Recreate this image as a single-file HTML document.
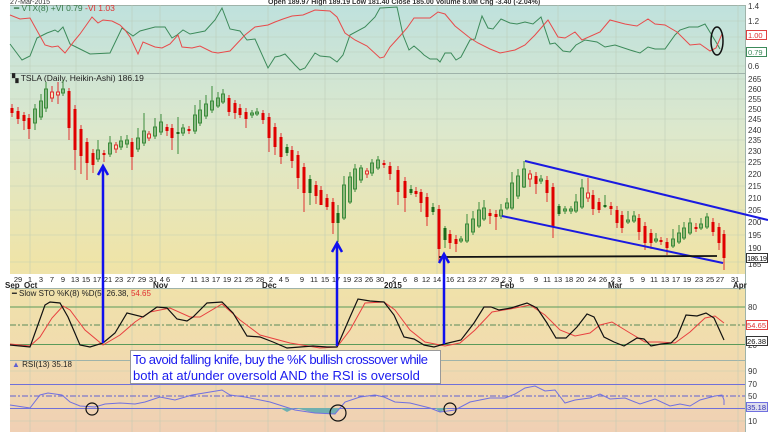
<!DOCTYPE html>
<html><head><meta charset="utf-8"><style>
html,body{margin:0;padding:0;background:#fff}
svg{display:block;font-family:"Liberation Sans",sans-serif}
.r{fill:#e00000}.rh{fill:#f6e4c0;stroke:#e03030;stroke-width:1}
.g{fill:none;stroke:#3c8c3c;stroke-width:1}.gs{fill:#1a6a1a}
.ax{font-size:8px;fill:#333}
.dt{font-size:7.5px;fill:#222}
.mo{font-size:8px;font-weight:bold;fill:#222}
</style></head><body>
<svg width="768" height="432" viewBox="0 0 768 432" xmlns="http://www.w3.org/2000/svg">
<defs>
<linearGradient id="bg" x1="0" y1="0" x2="0" y2="1">
<stop offset="0" stop-color="#bfe1dd"/>
<stop offset="0.3" stop-color="#dde8cc"/>
<stop offset="0.6" stop-color="#efe4a8"/>
<stop offset="0.8" stop-color="#f1dcae"/>
<stop offset="1" stop-color="#f0d0b4"/>
</linearGradient>
</defs>
<rect width="768" height="432" fill="#fff"/>
<rect x="10" y="5" width="735" height="427" fill="url(#bg)"/>
<rect x="745" y="5" width="23" height="427" fill="#fff"/>
<rect x="10" y="274" width="735" height="14" fill="#fff"/>
<g stroke="#9fb3aa" stroke-width="1">
<line x1="10" y1="73.5" x2="745" y2="73.5"/>
<line x1="10" y1="288.5" x2="745" y2="288.5"/>
<line x1="10" y1="360.5" x2="745" y2="360.5"/>
<line x1="745.5" y1="5" x2="745.5" y2="432"/>
<line x1="10" y1="5.5" x2="745" y2="5.5"/>
</g>
<g stroke="#b9c9b4" stroke-width="0.6" opacity="0.8">
<path d="M30 5V274M30 288V432M76 5V274M76 288V432M132 5V274M132 288V432M160 5V274M160 288V432M216 5V274M216 288V432M268 5V274M268 288V432M325 5V274M325 288V432M384 5V274M384 288V432M437 5V274M437 288V432M507 5V274M507 288V432M558 5V274M558 288V432M616 5V274M616 288V432M665 5V274M665 288V432M738 5V274M738 288V432"/>
<path d="M10 21H745M10 37H745M10 52H745M10 66H745M10 79H745M10 99H745M10 119H745M10 140H745M10 162H745M10 186H745M10 210H745M10 235H745M10 262H745M10 371H745M10 421H745"/>
</g>
<g stroke="#5a9a5a" stroke-width="1"><line x1="10" y1="307" x2="745" y2="307"/><line x1="10" y1="344.5" x2="745" y2="344.5"/></g>
<line x1="10" y1="325" x2="745" y2="325" stroke="#5a8a5a" stroke-width="1" stroke-dasharray="6,2,2,2"/>
<g stroke="#7070d8" stroke-width="1"><line x1="10" y1="384.5" x2="745" y2="384.5"/><line x1="10" y1="408.5" x2="745" y2="408.5"/></g>
<line x1="10" y1="396" x2="745" y2="396" stroke="#6060d0" stroke-width="1" stroke-dasharray="6,2,2,2"/>

<text x="10" y="4" font-size="7" fill="#333">27-Mar-2015</text>
<text x="268" y="4" font-size="7" font-weight="bold" fill="#333">Open 189.97  High 189.19  Low 181.40  Close 185.00  Volume 8.0M  Chg -3.40 (-2.04%)</text>

<text x="14" y="11" font-size="8.5"><tspan fill="#3a7a4a">━ VTX(8) +VI 0.79 </tspan><tspan fill="#e03030">-VI 1.03</tspan></text>
<polyline fill="none" stroke="#3c8a5a" stroke-width="1" points="10,44 22,60 30,56 37,38 47,33 55,30 58,32 63,27 70,44 80,49 90,54 110,53 122,28 133,36 140,31 155,27 165,27 172,38 177,35 183,30 190,34 205,31 215,20 222,8 230,29 240,31 247,40 255,39 268,68 275,57 280,56 285,54 295,65 300,70 305,68 315,53 320,56 330,57 337,62 343,55 350,35 365,27 375,17 380,8 397,7 403,35 409,50 414,46 421,52 424,55 430,59 437,59 440,62 445,53 451,53 456,60 461,57 470,40 475,39 482,16 488,28 493,29 501,19 510,23 517,24 525,22 533,24 541,17 550,44 555,43 563,51 570,52 576,45 585,40 597,42 605,47 615,45 630,50 640,53 648,47 655,49 665,49 675,35 680,30 689,27 698,27 705,24 716,42 720,49"/>
<polyline fill="none" stroke="#e84a4a" stroke-width="1" points="10,15 20,19 30,18 35,27 45,45 52,47 58,46 65,53 75,40 80,34 92,17 98,23 103,20 112,21 120,25 125,30 130,37 138,54 143,42 155,47 162,48 170,44 178,35 182,47 192,48 200,46 212,52 218,53 230,51 245,35 255,27 268,25 275,22 283,19 292,16 303,15 315,10 330,11 337,17 345,33 355,40 367,46 380,58 384,57 390,47 400,36 407,28 414,18 420,18 430,18 438,12 445,14 455,26 470,38 478,43 490,49 500,53 515,50 525,45 535,35 548,20 558,37 565,38 575,32 582,40 600,32 610,20 625,24 637,26 648,19 655,24 665,25 677,32 690,45 700,44 710,51 716,48 722,34"/>
<ellipse cx="717" cy="41" rx="6" ry="14" fill="none" stroke="#111" stroke-width="1.5"/>

<text x="12" y="81" font-size="8.5" fill="#222">▚ TSLA (Daily, Heikin-Ashi) 186.19</text>

<path stroke="#e03030" stroke-width="1" fill="none" d="M12 104V117M18 107V124M24 112V130M29 114V139M52 86V102M58 82V104M69 88V140M75 105V170M81 125V174M87 138V180M93 149V173M104 150V162M116 142V153M132 138V170M149 131V141M167 124V136M172 124V150M189 126V134M229 95V116M235 100V119M240 104V118M246 108V128M263 110V124M269 113V152M275 123V155M281 133V164M292 146V168M298 151V189M304 163V212M316 181V204M321 186V205M327 194V210M333 198V234M367 168V178M384 160V168M390 162V180M398 166V205M405 177V212M416 187V197M421 189V212M427 193V226M439 205V261M450 230V249M456 235V252M490 209V224M496 210V230M530 170V187M536 172V194M547 176V202M553 183V238M588 178V202M593 190V215M599 198V213M611 202V215M617 206V228M622 211V233M639 214V240M645 222V250M651 229V249M661 237V245M667 238V255M696 223V232M713 218V236M719 223V250M724 230V270"/>
<path stroke="#3c8c3c" stroke-width="1" fill="none" d="M35 104V130M41 94V120M46 82V112M63 80V96M98 140V162M110 136V157M121 136V150M127 135V148M138 128V152M144 113V146M155 118V139M161 114V135M178 117V154M183 124V136M195 105V134M200 100V126M206 95V119M212 86V113M218 92V108M223 89V104M252 110V118M257 108V116M287 144V156M310 175V205M338 205V242M344 176V220M350 172V204M355 164V192M361 165V183M372 159V176M378 156V170M411 185V195M433 203V215M445 226V248M461 236V243M467 214V243M473 211V235M479 202V228M484 200V221M501 204V219M507 198V210M512 172V210M518 169V199M524 161V188M541 175V184M559 204V216M565 206V214M571 206V214M576 194V213M582 179V209M605 195V208M628 211V224M634 211V223M656 233V243M673 229V248M679 225V244M684 222V240M690 218V235M701 218V230M707 213V229"/>
<g class="r">
<rect x="10.5" y="108" width="3" height="5"/><rect x="16.5" y="111" width="3" height="8"/><rect x="22.5" y="115" width="3" height="6"/><rect x="27.5" y="118" width="3" height="11"/>
<rect x="67.5" y="91" width="3" height="37"/><rect x="73.5" y="109" width="3" height="41"/><rect x="79.5" y="129" width="3" height="27"/><rect x="85.5" y="142" width="3" height="21"/><rect x="91.5" y="153" width="3" height="12"/>
<rect x="102.5" y="153" width="3" height="2"/><rect x="130.5" y="142" width="3" height="15"/><rect x="165.5" y="127" width="3" height="4"/><rect x="170.5" y="128" width="3" height="10"/><rect x="187.5" y="129" width="3" height="2"/>
<rect x="227.5" y="98" width="3" height="14"/><rect x="233.5" y="103" width="3" height="10"/><rect x="238.5" y="108" width="3" height="7"/><rect x="244.5" y="112" width="3" height="7"/>
<rect x="261.5" y="113" width="3" height="7"/><rect x="267.5" y="117" width="3" height="21"/><rect x="273.5" y="127" width="3" height="20"/><rect x="279.5" y="137" width="3" height="20"/>
<rect x="290.5" y="150" width="3" height="11"/><rect x="296.5" y="155" width="3" height="23"/><rect x="302.5" y="167" width="3" height="26"/><rect x="314.5" y="185" width="3" height="11"/><rect x="319.5" y="190" width="3" height="15"/><rect x="325.5" y="198" width="3" height="9"/><rect x="331.5" y="202" width="3" height="21"/>
<rect x="382.5" y="163" width="3" height="2"/><rect x="388.5" y="166" width="3" height="8"/><rect x="396.5" y="170" width="3" height="22"/><rect x="403.5" y="181" width="3" height="17"/><rect x="414.5" y="191" width="3" height="3"/><rect x="419.5" y="192" width="3" height="11"/><rect x="425.5" y="197" width="3" height="20"/>
<rect x="437.5" y="209" width="3" height="40"/><rect x="448.5" y="234" width="3" height="9"/><rect x="454.5" y="239" width="3" height="5"/>
<rect x="488.5" y="213" width="3" height="3"/><rect x="494.5" y="214" width="3" height="3"/><rect x="534.5" y="176" width="3" height="8"/><rect x="545.5" y="180" width="3" height="13"/><rect x="551.5" y="187" width="3" height="40"/>
<rect x="591.5" y="195" width="3" height="14"/><rect x="597.5" y="202" width="3" height="8"/><rect x="609.5" y="206" width="3" height="3"/><rect x="615.5" y="210" width="3" height="13"/><rect x="620.5" y="215" width="3" height="13"/>
<rect x="637.5" y="218" width="3" height="14"/><rect x="643.5" y="226" width="3" height="17"/><rect x="649.5" y="233" width="3" height="10"/><rect x="659.5" y="240" width="3" height="2"/><rect x="665.5" y="242" width="3" height="6"/>
<rect x="694.5" y="227" width="3" height="2"/><rect x="711.5" y="222" width="3" height="10"/><rect x="717.5" y="227" width="3" height="16"/><rect x="722.5" y="234" width="3" height="24"/>
</g>
<g class="rh">
<rect x="50.5" y="92" width="3" height="6"/><rect x="56.5" y="92" width="3" height="3"/><rect x="114.5" y="145" width="3" height="4"/><rect x="147.5" y="134" width="3" height="4"/><rect x="365.5" y="171" width="3" height="3"/><rect x="528.5" y="174" width="3" height="5"/><rect x="586.5" y="193" width="3" height="5"/>
</g>
<g class="g">
<rect x="33.5" y="109" width="3" height="14"/><rect x="39.5" y="101" width="3" height="16"/><rect x="44.5" y="89" width="3" height="19"/><rect x="61.5" y="89" width="3" height="4"/>
<rect x="96.5" y="150" width="3" height="9"/><rect x="108.5" y="143" width="3" height="11"/><rect x="119.5" y="141" width="3" height="6"/><rect x="125.5" y="140" width="3" height="4"/><rect x="136.5" y="138" width="3" height="11"/><rect x="142.5" y="131" width="3" height="12"/>
<rect x="153.5" y="127" width="3" height="9"/><rect x="159.5" y="122" width="3" height="10"/><rect x="181.5" y="128" width="3" height="5"/><rect x="193.5" y="115" width="3" height="16"/><rect x="198.5" y="110" width="3" height="13"/><rect x="204.5" y="104" width="3" height="12"/><rect x="210.5" y="101" width="3" height="9"/><rect x="216.5" y="98" width="3" height="8"/><rect x="221.5" y="94" width="3" height="8"/>
<rect x="250.5" y="113" width="3" height="2"/><rect x="255.5" y="112" width="3" height="2"/>
<rect x="342.5" y="185" width="3" height="33"/><rect x="348.5" y="177" width="3" height="25"/><rect x="353.5" y="169" width="3" height="20"/><rect x="359.5" y="168" width="3" height="12"/><rect x="370.5" y="163" width="3" height="10"/><rect x="376.5" y="160" width="3" height="8"/>
<rect x="459.5" y="239" width="3" height="2"/><rect x="465.5" y="224" width="3" height="17"/><rect x="471.5" y="219" width="3" height="13"/><rect x="477.5" y="210" width="3" height="16"/><rect x="482.5" y="208" width="3" height="11"/>
<rect x="499.5" y="210" width="3" height="6"/><rect x="505.5" y="203" width="3" height="5"/><rect x="510.5" y="183" width="3" height="25"/><rect x="516.5" y="176" width="3" height="20"/><rect x="522.5" y="169" width="3" height="18"/><rect x="539.5" y="179" width="3" height="2"/>
<rect x="563.5" y="209" width="3" height="2"/><rect x="569.5" y="209" width="3" height="2"/><rect x="574.5" y="202" width="3" height="9"/><rect x="580.5" y="188" width="3" height="19"/>
<rect x="626.5" y="220" width="3" height="2"/><rect x="632.5" y="216" width="3" height="5"/><rect x="654.5" y="239" width="3" height="2"/><rect x="671.5" y="239" width="3" height="7"/><rect x="677.5" y="233" width="3" height="9"/><rect x="682.5" y="228" width="3" height="10"/><rect x="688.5" y="223" width="3" height="10"/><rect x="699.5" y="224" width="3" height="4"/><rect x="705.5" y="217" width="3" height="10"/>
</g>
<g class="gs">
<rect x="176.5" y="132" width="3" height="2"/><rect x="285.5" y="147" width="3" height="6"/><rect x="308.5" y="179" width="3" height="14"/><rect x="336.5" y="213" width="3" height="10"/><rect x="409.5" y="189" width="3" height="4"/><rect x="431.5" y="207" width="3" height="5"/><rect x="443.5" y="228" width="3" height="12"/><rect x="557.5" y="206" width="3" height="8"/><rect x="603.5" y="205" width="3" height="2"/>
</g>

<line x1="525" y1="161" x2="768" y2="220" stroke="#1a1ae0" stroke-width="2"/>
<line x1="502" y1="216" x2="723" y2="263" stroke="#1a1ae0" stroke-width="2"/>
<line x1="439" y1="257" x2="717" y2="256" stroke="#111" stroke-width="1.8"/>

<g class="dt" text-anchor="middle">
<text x="18" y="282">29</text><text x="30" y="282">1</text><text x="41" y="282">3</text><text x="52" y="282">7</text><text x="63" y="282">9</text><text x="75" y="282">13</text><text x="86" y="282">15</text><text x="97" y="282">17</text><text x="108" y="282">21</text><text x="119" y="282">23</text><text x="131" y="282">27</text><text x="142" y="282">29</text><text x="153" y="282">31</text><text x="165" y="282">4 6</text><text x="183" y="282">7</text><text x="194" y="282">11</text><text x="205" y="282">13</text><text x="216" y="282">17</text><text x="227" y="282">19</text><text x="238" y="282">21</text><text x="249" y="282">25</text><text x="260" y="282">28</text><text x="271" y="282">2</text><text x="284" y="282">4 5</text><text x="302" y="282">9</text><text x="314" y="282">11</text><text x="325" y="282">15</text><text x="336" y="282">17</text><text x="347" y="282">19</text><text x="358" y="282">23</text><text x="369" y="282">26</text><text x="380" y="282">30</text>
<text x="394" y="282">2</text><text x="405" y="282">6</text><text x="416" y="282">8</text><text x="426" y="282">12</text><text x="437" y="282">14</text><text x="450" y="282">16</text><text x="461" y="282">21</text><text x="472" y="282">23</text><text x="483" y="282">27</text><text x="495" y="282">29</text><text x="507" y="282">2 3</text><text x="522" y="282">5</text><text x="536" y="282">9</text><text x="547" y="282">11</text><text x="558" y="282">13</text><text x="569" y="282">18</text><text x="580" y="282">20</text><text x="592" y="282">24</text><text x="603" y="282">26</text><text x="616" y="282">2 3</text><text x="632" y="282">5</text><text x="643" y="282">9</text><text x="654" y="282">11</text><text x="665" y="282">13</text><text x="676" y="282">17</text><text x="687" y="282">19</text><text x="699" y="282">23</text><text x="710" y="282">25</text><text x="720" y="282">27</text><text x="735" y="282">31</text>
</g>
<g class="mo">
<text x="5" y="288">Sep</text><text x="24" y="288">Oct</text><text x="153" y="288">Nov</text><text x="262" y="288">Dec</text><text x="384" y="288">2015</text><text x="500" y="288">Feb</text><text x="608" y="288">Mar</text><text x="733" y="288">Apr</text>
</g>

<text x="12" y="296" font-size="8"><tspan fill="#222">━ Slow STO %K(8) %D(5) 26.38, </tspan><tspan fill="#e03030">54.65</tspan></text>
<polyline fill="none" stroke="#e84040" stroke-width="1" points="10,344 30,346 40,337 52,318 63,306 70,310 85,330 103,345 120,335 135,322 150,312 170,308 190,317 200,317 222,304 240,320 260,335 290,343 320,348 337,347 350,330 365,303 384,302 395,310 410,330 425,342 445,346 460,343 475,330 492,312 510,309 530,305 545,315 560,330 575,336 590,333 600,325 612,322 630,333 645,342 660,342 675,343 690,332 705,318 715,316 724,323"/>
<polyline fill="none" stroke="#111" stroke-width="1.2" points="10,345 30,347 45,305 50,302 60,303 68,317 80,345 90,347 103,343 115,333 127,313 143,317 157,307 167,308 177,319 187,321 193,317 207,303 222,302 233,313 247,336 260,337 273,342 287,348 300,347 313,346 327,347 337,347 350,317 358,299 370,301 384,302 394,315 404,337 414,339 424,345 434,347 444,344 461,340 474,323 484,307 491,307 499,310 511,308 527,303 537,308 547,323 556,338 566,338 577,327 587,314 594,317 604,337 614,342 624,346 637,338 644,339 651,346 661,344 671,343 677,337 686,315 697,316 706,313 714,318 724,340"/>

<text x="12" y="367" font-size="8" fill="#222"><tspan fill="#6060d0">▲</tspan> RSI(13) 35.18</text>
<path d="M280 408 L287 412 L295 408Z M295 408 L315 413 L335 414 L340 408Z M435 408 L440 412 L448 408Z" fill="#70b0b0"/>
<polyline fill="none" stroke="#7070e0" stroke-width="1" points="10,405 30,408 40,395 48,393 62,395 70,402 80,406 95,407 105,404 120,403 135,404 145,402 160,397 175,400 192,395 210,392 222,390 230,395 245,397 270,402 295,410 315,413 335,414 345,402 360,397 375,395 384,397 395,402 410,403 430,408 440,412 455,410 470,402 490,398 505,398 515,394 525,388 535,386 545,391 555,390 565,403 575,400 590,398 600,394 610,399 625,398 640,404 655,399 670,406 680,404 690,406 700,400 715,396 722,395 724,400 724,405"/>
<g fill="none" stroke="#111" stroke-width="1.2">
<circle cx="92" cy="409" r="6"/><circle cx="338" cy="413" r="8"/><circle cx="450" cy="409" r="6"/>
</g>

<g stroke="#1010ee" stroke-width="2.5" fill="none">
<line x1="103" y1="167" x2="103" y2="343"/><polyline points="98,175 103,166 108,175"/>
<line x1="337" y1="244" x2="337" y2="346"/><polyline points="332,252 337,243 342,252"/>
<line x1="444" y1="255" x2="444" y2="344"/><polyline points="439,263 444,254 449,263"/>
</g>

<rect x="130.5" y="350.5" width="310" height="33" fill="#fff" stroke="#999"/>
<text x="133" y="364" font-size="13" fill="#1a1aee" textLength="295">To avoid falling knife, buy the %K bullish crossover while</text>
<text x="133" y="380" font-size="13" fill="#1a1aee">both at at/under oversold AND the RSI is oversold</text>

<g class="ax">
<text x="748" y="9">1.4</text><text x="748" y="24">1.2</text><text x="748" y="69">0.6</text>
<text x="748" y="82">265</text><text x="748" y="92">260</text><text x="748" y="102">255</text><text x="748" y="112">250</text><text x="748" y="122">245</text><text x="748" y="133">240</text><text x="748" y="143">235</text><text x="748" y="154">230</text><text x="748" y="165">225</text><text x="748" y="177">220</text><text x="748" y="189">215</text><text x="748" y="201">210</text><text x="748" y="213">205</text><text x="748" y="225">200</text><text x="748" y="238">195</text><text x="748" y="251">190</text><text x="748" y="267">185</text>
<text x="748" y="310">80</text><text x="748" y="348">20</text>
<text x="748" y="374">90</text><text x="748" y="387">70</text><text x="748" y="399">50</text><text x="748" y="424">10</text>
</g>
<g font-size="7.5">
<rect x="746.5" y="30.5" width="20" height="9" fill="#fff" stroke="#e04040"/><text x="748" y="38" fill="#e03030">1.00</text>
<rect x="746.5" y="47.5" width="20" height="9" fill="#fff" stroke="#3c8a5a"/><text x="748" y="55" fill="#3c8a5a">0.79</text>
<rect x="746.5" y="253.5" width="21" height="9" fill="#fff" stroke="#333"/><text x="747" y="261" fill="#111" textLength="20">186.19</text>
<rect x="746.5" y="320.5" width="21" height="9" fill="#fff" stroke="#e04040"/><text x="747" y="328" fill="#e03030" textLength="19">54.65</text>
<rect x="746.5" y="336.5" width="21" height="9" fill="#fff" stroke="#333"/><text x="747" y="344" fill="#111" textLength="19">26.38</text>
<rect x="746.5" y="402.5" width="21" height="9" fill="#dde" stroke="#7070e0"/><text x="747" y="410" fill="#3030b0" textLength="19">35.18</text>
</g>
</svg>
</body></html>
